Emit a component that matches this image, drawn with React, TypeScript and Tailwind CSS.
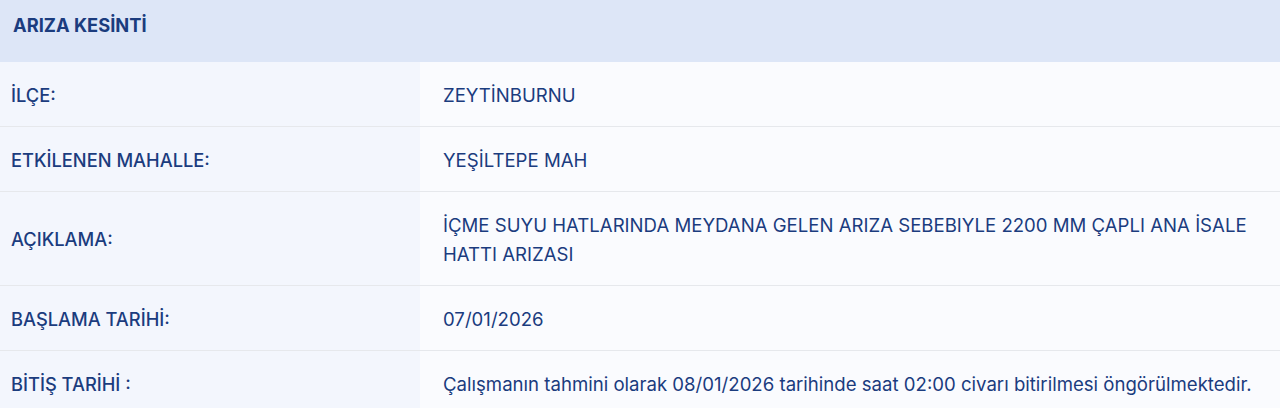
const rows: { label: string; value: string }[] = [
  { label: 'İLÇE:', value: 'ZEYTİNBURNU' },
  { label: 'ETKİLENEN MAHALLE:', value: 'YEŞİLTEPE MAH' },
  {
    label: 'AÇIKLAMA:',
    value: 'İÇME SUYU HATLARINDA MEYDANA GELEN ARIZA SEBEBIYLE 2200 MM ÇAPLI ANA İSALE HATTI ARIZASI',
  },
  { label: 'BAŞLAMA TARİHİ:', value: '07/01/2026' },
  {
    label: 'BİTİŞ TARİHİ :',
    value: 'Çalışmanın tahmini olarak 08/01/2026 tarihinde saat 02:00 civarı bitirilmesi öngörülmektedir.',
  },
];

export default function App() {
  return (
    <div className="w-[1280px] h-[408px] overflow-hidden bg-[#fafbfe] text-[#1b3c7e] font-['Inter',sans-serif]">
      <div className="h-[62px] bg-[#dde6f7] px-[13px] pt-[11px]">
        <h2 className="text-[18.3px] leading-[29px] font-bold">ARIZA KESİNTİ</h2>
      </div>
      <div>
        {rows.map((row, i) => (
          <div key={i} className="flex border-b border-[#e6e8ec]">
            <div className="w-[420px] shrink-0 flex items-center bg-[#f3f6fd] px-[11px] pt-[18.5px] pb-[16.5px] text-[18.3px] leading-[29px] font-medium">
              {row.label}
            </div>
            <div className="flex-1 flex items-center bg-[#fafbfe] pl-[23px] pr-[22px] pt-[18.5px] pb-[16.5px] text-[18.6px] leading-[29px]">
              {row.value}
            </div>
          </div>
        ))}
      </div>
    </div>
  );
}
